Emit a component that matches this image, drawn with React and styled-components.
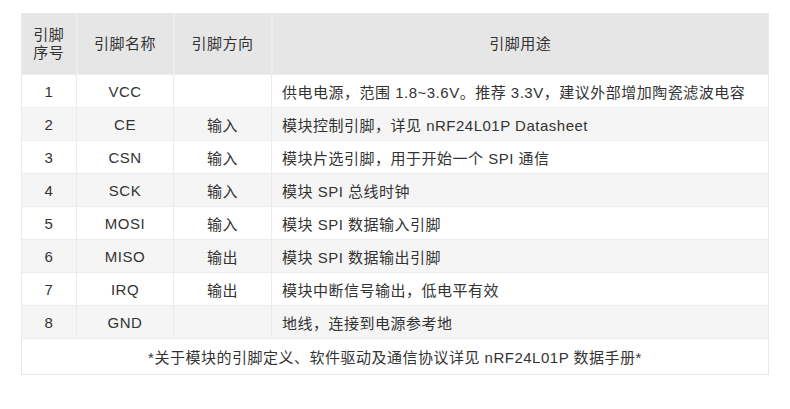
import React from 'react';
import styled, { createGlobalStyle } from 'styled-components';

const GlobalStyle = createGlobalStyle`
  body {
    margin: 0;
    background: #ffffff;
    font-family: "Liberation Sans", "Noto Sans CJK SC", sans-serif;
    color: #333333;
  }
`;

const pins = [
  { no: 1, name: 'VCC', dir: '', use: '供电电源，范围 1.8~3.6V。推荐 3.3V，建议外部增加陶瓷滤波电容' },
  { no: 2, name: 'CE', dir: '输入', use: '模块控制引脚，详见 nRF24L01P Datasheet' },
  { no: 3, name: 'CSN', dir: '输入', use: '模块片选引脚，用于开始一个 SPI 通信' },
  { no: 4, name: 'SCK', dir: '输入', use: '模块 SPI 总线时钟' },
  { no: 5, name: 'MOSI', dir: '输入', use: '模块 SPI 数据输入引脚' },
  { no: 6, name: 'MISO', dir: '输出', use: '模块 SPI 数据输出引脚' },
  { no: 7, name: 'IRQ', dir: '输出', use: '模块中断信号输出，低电平有效' },
  { no: 8, name: 'GND', dir: '', use: '地线，连接到电源参考地' },
];

const Page = styled.div`
  padding: 13px 21px;
`;

const Table = styled.table`
  width: 748px;
  border-collapse: collapse;
  table-layout: fixed;
  font-size: 15px;
  letter-spacing: 0.5px;
  border: 1px solid #e8e8e8;
`;

const HeadCell = styled.th`
  height: 60px;
  padding: 0 2px;
  background: #e6e6e6;
  font-weight: normal;
  line-height: 18px;
  text-align: center;
  border-left: 2px solid #ededed;
  &:first-child {
    border-left: none;
  }
`;

const Row = styled.tr`
  background: ${(p) => (p.$shade ? '#f5f5f5' : '#ffffff')};
`;

const Cell = styled.td`
  height: 32px;
  padding: 0 10px;
  text-align: ${(p) => (p.$left ? 'left' : 'center')};
  border: 1px solid #ececec;
  white-space: nowrap;
`;

const Note = styled.td`
  height: 33px;
  text-align: center;
  border-top: 1px solid #ececec;
`;

export default function App() {
  return (
    <Page>
      <GlobalStyle />
      <Table>
        <colgroup>
          <col style={{ width: 55 }} />
          <col style={{ width: 97 }} />
          <col style={{ width: 98 }} />
          <col />
        </colgroup>
        <thead>
          <tr>
            <HeadCell>引脚<br />序号</HeadCell>
            <HeadCell>引脚名称</HeadCell>
            <HeadCell>引脚方向</HeadCell>
            <HeadCell>引脚用途</HeadCell>
          </tr>
        </thead>
        <tbody>
          {pins.map((p, i) => (
            <Row key={p.no} $shade={i % 2 === 1}>
              <Cell>{p.no}</Cell>
              <Cell>{p.name}</Cell>
              <Cell>{p.dir}</Cell>
              <Cell $left>{p.use}</Cell>
            </Row>
          ))}
          <tr>
            <Note colSpan={4}>*关于模块的引脚定义、软件驱动及通信协议详见 nRF24L01P 数据手册*</Note>
          </tr>
        </tbody>
      </Table>
    </Page>
  );
}
